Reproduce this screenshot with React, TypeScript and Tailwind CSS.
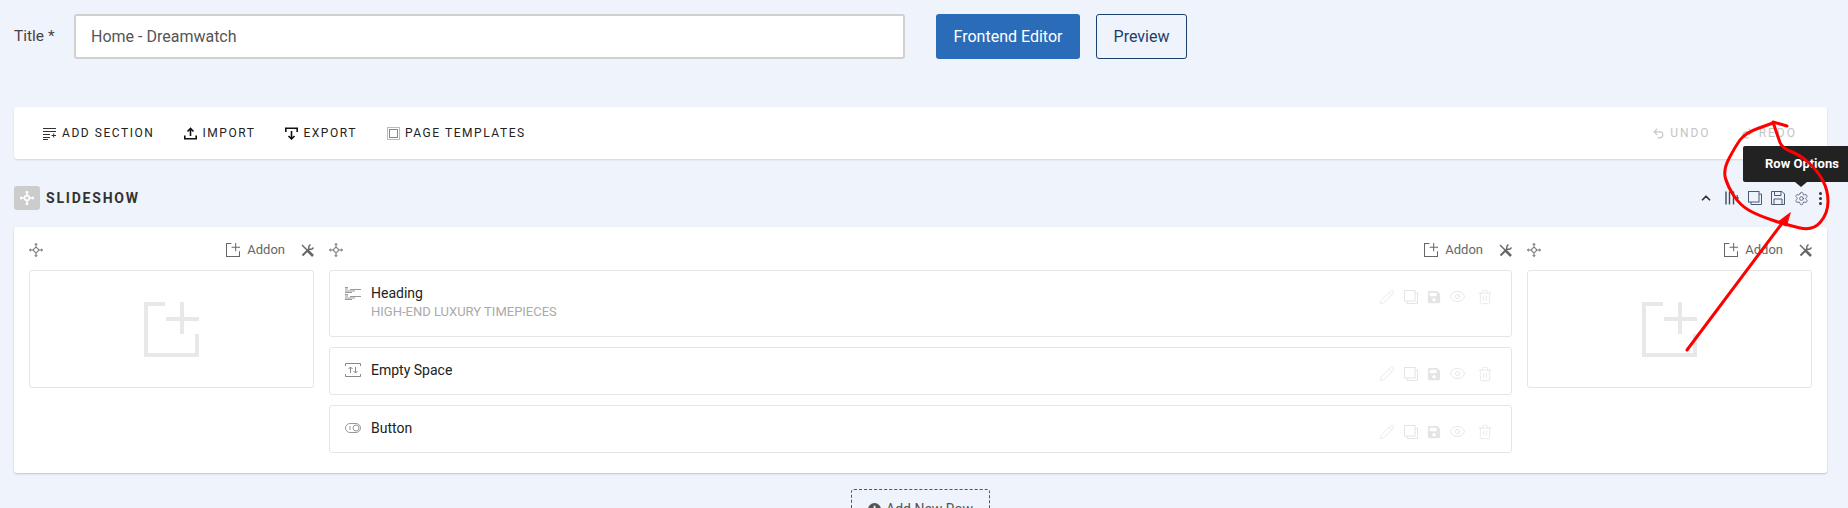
import React from 'react';
import { ChevronUp, Eye, Pencil, Settings, Trash2, Undo2, Redo2 } from 'lucide-react';
import { FaSave } from 'react-icons/fa';

const MoveIcon = ({ size = 14, color = '#666', width = 1 }: { size?: number; color?: string; width?: number }) => (
    <svg width={size} height={size} viewBox="0 0 14 14" fill="none" stroke={color} strokeWidth={width}>
        <circle cx="7" cy="7" r="2.4" />
        <path d="M7 0.5V4.5M7 9.5V13.5M0.5 7H4.5M9.5 7H13.5" />
        <path d="M5.8 1.8L7 0.5L8.2 1.8M5.8 12.2L7 13.5L8.2 12.2M1.8 5.8L0.5 7L1.8 8.2M12.2 5.8L13.5 7L12.2 8.2" />
    </svg>
);

const AddIcon = ({ size = 14, color = '#666', width = 4 }: { size?: number; color?: string; width?: number }) => (
    <svg width={size} height={size} viewBox="0 0 55 55" fill="none" stroke={color} strokeWidth={width}>
        <path d="M21 2H2V53H53V32" />
        <path d="M38 0V32M22 17H55" />
    </svg>
);

const CopyIcon = ({ color = '#555', size = 14 }: { color?: string; size?: number }) => (
    <svg width={size} height={size} viewBox="0 0 14 14" fill="none" stroke={color} strokeWidth="1">
        <rect x="0.5" y="0.5" width="10.5" height="10.5" />
        <path d="M11 3H13.5V13.5H3V11" />
    </svg>
);

const ColumnsIcon = () => (
    <svg width="14" height="14" viewBox="0 0 14 14" fill="none" stroke="#3b4a5e" strokeWidth="1.4">
        <path d="M1 0.5V13.5M4.5 0.5V13.5M8.5 0.5V13.5" />
        <path d="M10.5 7H14M12.2 4V10" strokeWidth="1.2" />
    </svg>
);

const FloppyIcon = () => (
    <svg width="14" height="14" viewBox="0 0 14 14" fill="none" stroke="#4b5a70" strokeWidth="1">
        <path d="M0.5 0.5H11L13.5 3V13.5H0.5Z" />
        <path d="M3.5 0.5V4.5H10V0.5M3 13.5V8H11V13.5" />
    </svg>
);

const ToolsIcon = () => (
    <svg width="13" height="13" viewBox="0 0 13 13" fill="none" stroke="#666">
        <path d="M1 1L7 7" strokeWidth="1.4" />
        <path d="M6.5 6.5L12 12" strokeWidth="2.6" />
        <path d="M1.5 11.5L7.5 5.5" strokeWidth="2" />
        <path d="M7.5 5.5L8 2L9.5 0.5M7.5 5.5L11 5L12.5 3.5" strokeWidth="1.4" />
    </svg>
);

const HeadingIcon = () => (
    <svg width="16" height="14" viewBox="0 0 16 14" fill="none" stroke="#999" strokeWidth="1">
        <path d="M0 1.5H3M0 3H3M5 3.5H16M0 5H10M0 6.5H7" />
        <path d="M0 8.5H3M0 10H3M5 10.5H16M0 12H10M0 13.5H7" />
    </svg>
);

const SpaceIcon = () => (
    <svg width="16" height="14" viewBox="0 0 16 14" fill="none" stroke="#888" strokeWidth="1">
        <path d="M0.5 3V0.5H15.5V3M0.5 11V13.5H15.5V11" />
        <path d="M5.5 10V4M3.5 6L5.5 4L7.5 6M10.5 4V10M8.5 8L10.5 10L12.5 8" />
    </svg>
);

const SwitchIcon = () => (
    <svg width="16" height="10" viewBox="0 0 16 10" fill="none">
        <rect x="0.5" y="0.5" width="15" height="9" rx="4.5" stroke="#999" />
        <circle cx="11" cy="5" r="3" stroke="#999" />
        <path d="M5 3V7" stroke="#999" />
    </svg>
);

const AddSectionIcon = () => (
    <svg width="13" height="13" viewBox="0 0 13 13" fill="none" stroke="#333" strokeWidth="1">
        <path d="M0 1.5H13M0 4.5H13M0 7.5H7M0 10.5H7M0 12.5H5M8.5 8.5H13M10.7 6.5V10.5" />
    </svg>
);

const ImportIcon = () => (
    <svg width="13" height="13" viewBox="0 0 13 13" fill="none" stroke="#111" strokeWidth="1.6">
        <path d="M6.5 9V1.5M3.5 4.5L6.5 1.5L9.5 4.5" />
        <path d="M0.8 8.5V11.8H12.2V8.5" />
    </svg>
);

const ExportIcon = () => (
    <svg width="13" height="13" viewBox="0 0 13 13" fill="none" stroke="#111" strokeWidth="1.6">
        <path d="M6.5 4V12M3.5 9L6.5 12L9.5 9" />
        <path d="M0.8 5V1.2H12.2V5" />
    </svg>
);

const TemplateIcon = () => (
    <svg width="13" height="13" viewBox="0 0 13 13" fill="none">
        <rect x="0.5" y="0.5" width="12" height="12" stroke="#777" strokeDasharray="1 1" />
        <rect x="2.5" y="2.5" width="8" height="8" stroke="#888" />
    </svg>
);

const ColumnHeader = () => (
    <div className="flex h-[43px] items-center justify-between pt-[3px]">
        <MoveIcon />
        <div className="flex items-center">
            <AddIcon />
            <span className="ml-[7px] text-[13px] text-[#666]">Addon</span>
            <span className="ml-[16px]"><ToolsIcon /></span>
        </div>
    </div>
);

const EmptyColumn = () => (
    <div>
        <ColumnHeader />
        <div className="flex h-[118px] items-center justify-center rounded-[3px] border border-[#e5e5e5]">
            <AddIcon size={55} color="#e8e8e8" />
        </div>
    </div>
);

const ElementActions = () => (
    <div className="flex items-center self-start pt-[5px] text-[#e4e4e4]">
        <Pencil size={16} strokeWidth={1.2} />
        <span className="ml-[9px]"><CopyIcon color="#e4e4e4" /></span>
        <FaSave className="ml-[9px] text-[14px]" />
        <Eye className="ml-[8px]" size={17} strokeWidth={1.3} />
        <Trash2 className="ml-[11px]" size={16} strokeWidth={1.2} />
    </div>
);

const ELEMENTS = [
    { name: 'Heading', sub: 'HIGH-END LUXURY TIMEPIECES', icon: <HeadingIcon />, height: 'h-[67px]' },
    { name: 'Empty Space', sub: '', icon: <SpaceIcon />, height: 'h-[48px]' },
    { name: 'Button', sub: '', icon: <SwitchIcon />, height: 'h-[48px]' },
];

// the hand drawn circle, passed through point midpoints so it reads as one stroke
const CIRCLE: [number, number][] = [[1787, 126], [1773, 122], [1778, 137], [1782, 148], [1800, 155], [1817, 170], [1828, 190], [1828, 213], [1813, 231], [1787, 225], [1757, 215], [1740, 205], [1728, 187], [1723, 170], [1735, 147], [1745, 133], [1773, 123]];
const smooth = (pts: [number, number][]) => {
    let d = `M${pts[0][0]} ${pts[0][1]}L${pts[1][0]} ${pts[1][1]}`;
    for (let i = 1; i < pts.length - 1; i++) {
        const mx = (pts[i][0] + pts[i + 1][0]) / 2;
        const my = (pts[i][1] + pts[i + 1][1]) / 2;
        d += `Q${pts[i][0]} ${pts[i][1]} ${mx} ${my}`;
    }
    const last = pts[pts.length - 1];
    return `${d}L${last[0]} ${last[1]}`;
};

export default function App() {
    return (
        <div className="relative h-[508px] w-[1848px] overflow-hidden bg-[#eff3fb] font-['Roboto',sans-serif]">
            {/* Title row */}
            <div className="flex items-center pl-[14px] pt-[14px]">
                <label className="w-[60px] text-[15.5px] text-[#444]">Title *</label>
                <div className="flex h-[45px] w-[831px] items-center rounded-[3px] border-2 border-[#d0d0d0] bg-white pl-[15px] text-[16px] text-[#555]">
                    Home - Dreamwatch
                </div>
                <button className="ml-[31px] h-[45px] w-[144px] rounded-[3px] bg-[#2b6cb8] text-[16px] text-white">Frontend Editor</button>
                <button className="ml-[16px] h-[45px] w-[91px] rounded-[3px] border border-[#1d3f6e] text-[16px] text-[#1d3f6e]">Preview</button>
            </div>

            {/* Toolbar */}
            <div className="ml-[14px] mt-[48px] flex h-[52px] w-[1813px] items-center justify-between rounded-[3px] bg-white pl-[29px] pr-[30px] shadow-[0_1px_2px_rgba(0,0,0,0.12)]">
                <div className="flex items-center text-[12px] tracking-[1.55px] text-[#222]">
                    <AddSectionIcon />
                    <span className="ml-[6px]">ADD SECTION</span>
                    <span className="ml-[30px]"><ImportIcon /></span>
                    <span className="ml-[5px]">IMPORT</span>
                    <span className="ml-[30px]"><ExportIcon /></span>
                    <span className="ml-[5px]">EXPORT</span>
                    <span className="ml-[30px]"><TemplateIcon /></span>
                    <span className="ml-[5px]">PAGE TEMPLATES</span>
                </div>
                <div className="flex items-center text-[12px] tracking-[2px] text-[#c4c4c4]">
                    <Undo2 size={13} />
                    <span className="ml-[5px]">UNDO</span>
                    <Redo2 className="ml-[30px]" size={13} />
                    <span className="ml-[5px]">REDO</span>
                </div>
            </div>

            {/* Section header */}
            <div className="ml-[14px] flex h-[68px] w-[1813px] items-center justify-between pr-[5px] pt-[10px]">
                <div className="flex items-center">
                    <div className="flex h-[24px] w-[26px] items-center justify-center rounded-[3px] bg-[#ccc]">
                        <MoveIcon color="#fff" width={1.6} />
                    </div>
                    <span className="ml-[6px] text-[14px] font-bold tracking-[1.8px] text-[#333]">SLIDESHOW</span>
                </div>
                <div className="flex items-center gap-[9px] text-[#333]">
                    <ChevronUp className="mr-[3px]" size={14} strokeWidth={3} />
                    <ColumnsIcon />
                    <CopyIcon color="#4b5a70" />
                    <FloppyIcon />
                    <Settings size={15} strokeWidth={1.3} className="text-[#4b5a70]" />
                    <div className="ml-[1px] flex flex-col gap-[2px]">
                        <span className="h-[3px] w-[3px] rounded-full bg-[#333]" />
                        <span className="h-[3px] w-[3px] rounded-full bg-[#333]" />
                        <span className="h-[3px] w-[3px] rounded-full bg-[#333]" />
                    </div>
                </div>
            </div>

            {/* Row */}
            <div className="ml-[14px] grid h-[246px] w-[1813px] grid-cols-[285px_1183px_285px] gap-x-[15px] rounded-[3px] bg-white px-[15px] shadow-[0_1px_2px_rgba(0,0,0,0.2)]">
                <EmptyColumn />
                <div>
                    <ColumnHeader />
                    <div className="flex flex-col gap-[10px]">
                        {ELEMENTS.map(el => (
                            <div key={el.name} className={`flex justify-between rounded-[3px] border border-[#e5e5e5] pl-[15px] pr-[18px] pt-[12px] ${el.height}`}>
                                <div className="flex items-start">
                                    <div className="flex h-[20px] w-[26px] items-center">{el.icon}</div>
                                    <div>
                                        <div className="text-[14px] leading-[20px] text-[#222]">{el.name}</div>
                                        {el.sub && <div className="mt-[1px] text-[13px] leading-[16px] text-[#aaa]">{el.sub}</div>}
                                    </div>
                                </div>
                                <ElementActions />
                            </div>
                        ))}
                    </div>
                </div>
                <EmptyColumn />
            </div>

            {/* Add new row, cut off by the window */}
            <div className="ml-[851px] mt-[16px] flex h-[40px] w-[139px] items-center justify-center gap-[5px] rounded-[3px] border border-dashed border-[#555] text-[14px] text-[#555]">
                <span className="flex h-[13px] w-[13px] items-center justify-center rounded-full bg-[#555] text-[11px] font-bold text-white">+</span>
                Add New Row
            </div>

            {/* Tooltip */}
            <div className="absolute left-[1743px] top-[146px] flex h-[36px] w-[105px] items-center rounded-l-[2px] bg-[#222] pl-[22px] text-[13px] font-bold whitespace-nowrap text-white">
                Row Options
                <div className="absolute left-[52px] top-[36px] h-0 w-0 border-x-[6px] border-t-[5px] border-x-transparent border-t-[#222]" />
            </div>

            {/* Red annotation drawn over the screenshot */}
            <svg className="pointer-events-none absolute left-0 top-0" width="1848" height="508" fill="none" stroke="#f00" strokeWidth="3" strokeLinejoin="round" strokeLinecap="round">
                <path d={smooth(CIRCLE)} />
                <path d="M1783 222L1687 350" />
                <path d="M1790 213L1778 222L1786 226Z" fill="#f00" strokeWidth="1" />
            </svg>
        </div>
    );
}
